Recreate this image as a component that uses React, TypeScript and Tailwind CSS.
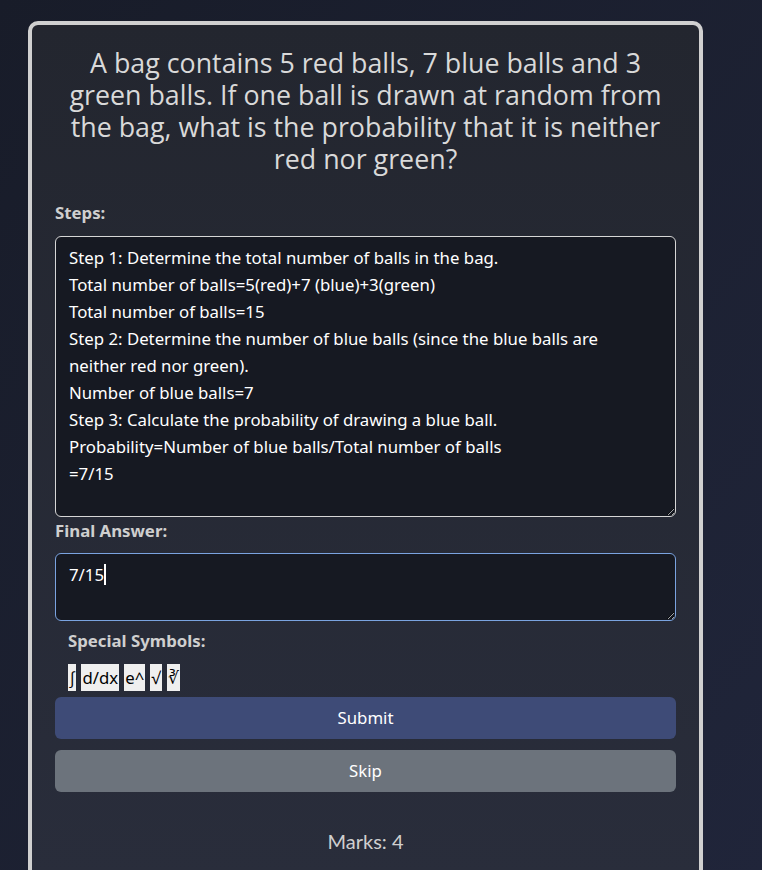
import { Fragment, useEffect, useRef } from "react";

// ---------------------------------------------------------------------------
// Content
// ---------------------------------------------------------------------------

const QUESTION_LINES = [
  "A bag contains 5 red balls, 7 blue balls and 3",
  "green balls. If one ball is drawn at random from",
  "the bag, what is the probability that it is neither",
  "red nor green?",
];

const STEPS = [
  "Step 1: Determine the total number of balls in the bag.",
  "Total number of balls=5(red)+7 (blue)+3(green)",
  "Total number of balls=15",
  "Step 2: Determine the number of blue balls (since the blue balls are",
  "neither red nor green).",
  "Number of blue balls=7",
  "Step 3: Calculate the probability of drawing a blue ball.",
  "Probability=Number of blue balls/Total number of balls",
  "=7/15",
].join("\n");

const SYMBOLS = ["∫", "d/dx", "e^", "√", "∛"];

const BODY_FONT = { fontFamily: '"Noto Sans", "Open Sans", sans-serif' };
const TITLE_FONT = { fontFamily: '"Open Sans", Lato, sans-serif' };
const MARKS_FONT = { fontFamily: 'Lato, "Open Sans", sans-serif' };

// ---------------------------------------------------------------------------
// Page
// ---------------------------------------------------------------------------

export default function App() {
  const answerRef = useRef<HTMLTextAreaElement>(null);

  useEffect(() => {
    const el = answerRef.current;
    if (el) {
      el.focus();
      el.setSelectionRange(el.value.length, el.value.length);
    }
  }, []);

  return (
    <div className="min-h-[870px] bg-gradient-to-br from-[#181c29] to-[#20253a] pt-[21px] pl-[28px]" style={BODY_FONT}>
      <div className="w-[675px] h-[860px] rounded-[10px] border-4 border-[#d0d0d0] bg-gradient-to-b from-[#23262f] to-[#292d3b] px-[23px] pt-[22px]">
        {/* question */}
        <h1
          className="text-center text-[26.8px] leading-[32px] text-[#d9d9d9] whitespace-nowrap"
          style={TITLE_FONT}
        >
          {QUESTION_LINES.map((l, i) => (
            <Fragment key={l}>
              {i > 0 && <br />}
              {l}
            </Fragment>
          ))}
        </h1>

        {/* steps */}
        <label className="block mt-[26px] text-[16.8px] leading-[24px] font-bold text-[#cfcfcf]">
          Steps:
        </label>
        <textarea
          defaultValue={STEPS}
          spellCheck={false}
          className="block mt-[11px] w-full h-[281px] rounded-[6px] border border-[#d6d6d6] bg-[#161922] px-[13px] pt-[7px] text-[16.8px] leading-[27px] text-white outline-none overflow-hidden"
          style={BODY_FONT}
        />

        {/* final answer */}
        <label className="block mt-[2px] text-[16.8px] leading-[24px] font-bold text-[#cfcfcf]">
          Final Answer:
        </label>
        <div className="relative mt-[10px]">
          <textarea
            ref={answerRef}
            defaultValue="7/15"
            spellCheck={false}
            className="block w-full h-[68px] rounded-[6px] border border-[#7aa3e0] bg-[#161922] px-[13px] pt-[7px] text-[16.8px] leading-[27px] text-white outline-none overflow-hidden caret-transparent"
            style={BODY_FONT}
          />
          {/* caret */}
          <span className="absolute left-[49px] top-[11px] h-[21px] w-[1.5px] bg-white" />
        </div>

        {/* special symbols */}
        <div className="px-[13px]">
          <p className="mt-[8px] text-[16.8px] leading-[24px] font-bold text-[#cfcfcf]">
            Special Symbols:
          </p>
          <div className="mt-[11px] flex gap-[5px]">
            {SYMBOLS.map((s) => (
              <button
                key={s}
                className="h-[27px] px-[1px] bg-[#efefef] text-black text-[16.8px] leading-[27px]"
                style={BODY_FONT}
              >
                {s}
              </button>
            ))}
          </div>
        </div>

        {/* actions */}
        <button className="mt-[6px] w-full h-[42px] rounded-[6px] bg-[#3e4b77] text-white text-[16.8px]">
          Submit
        </button>
        <button className="mt-[11px] w-full h-[42px] rounded-[6px] bg-[#6c737c] text-white text-[16.8px]">
          Skip
        </button>

        <p className="mt-[34px] text-center text-[20px] text-[#cfcfcf]" style={MARKS_FONT}>
          Marks: 4
        </p>
      </div>
    </div>
  );
}
